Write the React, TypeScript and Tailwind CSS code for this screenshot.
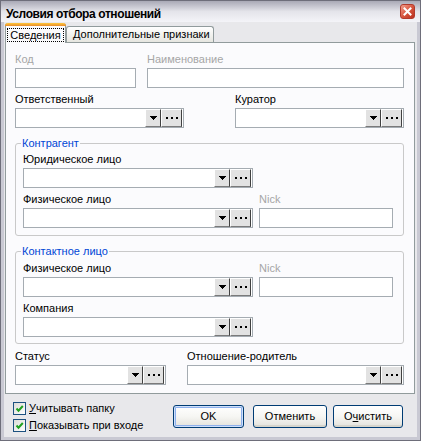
import { ReactNode } from 'react';
import clsx from 'clsx';

function Label({ children, disabled }: { children: ReactNode; disabled?: boolean }) {
  return (
    <div className={clsx('h-[13px] mb-[2px] whitespace-nowrap', disabled ? 'text-[#a6a6a6]' : 'text-black')}>
      {children}
    </div>
  );
}

function Field({ label, disabled, children }: { label: string; disabled?: boolean; children: ReactNode }) {
  return (
    <div className="flex flex-col">
      <Label disabled={disabled}>{label}</Label>
      {children}
    </div>
  );
}

function TextBox({ className }: { className: string }) {
  return <div className={clsx('h-[20px] border border-[#a5acb2] bg-white', className)} />;
}

function Combo({ className }: { className: string }) {
  return (
    <div className={clsx('h-[20px] border border-[#a5acb2] bg-white flex justify-end pr-px', className)}>
      <div className="w-[16px] h-full bg-[#e2e2e2] border-t border-l border-t-white border-l-white border-r border-b border-r-[#404040] border-b-[#7a7a7a] flex items-center justify-center">
        <svg width="7" height="4" viewBox="0 0 7 4" shapeRendering="crispEdges">
          <path d="M0 0H7V1H6V2H5V3H4V4H3V3H2V2H1V1H0Z" fill="#000" />
        </svg>
      </div>
      <div className="w-[21px] h-full bg-[#e2e2e2] border-t border-l border-t-white border-l-white border-r border-b border-r-[#404040] border-b-[#7a7a7a] flex items-center justify-center">
        <svg width="12" height="2" viewBox="0 0 12 2" shapeRendering="crispEdges">
          <rect x="0" y="0" width="2" height="2" fill="#000" />
          <rect x="5" y="0" width="2" height="2" fill="#000" />
          <rect x="10" y="0" width="2" height="2" fill="#000" />
        </svg>
      </div>
    </div>
  );
}

function GroupBox({ title, className, children }: { title: string; className: string; children: ReactNode }) {
  return (
    <div className={clsx('relative border border-[#c9c9c9] rounded-[3px]', className)}>
      <span className="absolute left-[5px] top-[-7px] px-px bg-[#fbfbfd] text-[#0046d5] leading-[13px]">{title}</span>
      {children}
    </div>
  );
}

function Check({ children }: { children: ReactNode }) {
  return (
    <div className="flex items-start gap-[3px] h-[13px]">
      <div className="w-[13px] h-[13px] border border-[#1c5180] bg-gradient-to-br from-[#dcdcd7] to-white flex items-center justify-center">
        <svg width="9" height="9" viewBox="0 0 9 9">
          <path d="M1.5 4.5l2 2.2L7.8 2" stroke="#21a121" strokeWidth="2" fill="none" />
        </svg>
      </div>
      <span className="leading-[13px]">{children}</span>
    </div>
  );
}

function XpButton({ className, isDefault, children }: { className: string; isDefault?: boolean; children: ReactNode }) {
  return (
    <div
      className={clsx(
        'h-[23px] rounded-[3px] border border-[#003c74] bg-gradient-to-b from-white via-[#f6f6f3] to-[#e3e2dc] flex items-center justify-center',
        isDefault
          ? 'shadow-[inset_0_0_0_1px_#cee0fb,inset_0_0_0_2px_#8eb0ec]'
          : 'shadow-[inset_0_-2px_0_#d6d5cc]',
        className
      )}
    >
      {children}
    </div>
  );
}

export default function App() {
  return (
    <div className="w-[421px] h-[441px] flex flex-col border border-[#6e6e7a] bg-[#c9c9d3] text-[11px] leading-[13px] text-black font-['Liberation_Sans',Arial,sans-serif]">
      {/* Title bar */}
      <div className="h-[21px] flex items-start justify-between pl-[5px] pr-[5px] bg-gradient-to-b from-[#a9a9b6] via-[#e4e4ea] to-[#f4f4f8]">
        <span className="mt-[6px] text-[12px] leading-[15px] font-bold tracking-[-0.4px]">Условия отбора отношений</span>
        <div className="mt-[3px] w-[15px] h-[15px] rounded-[3px] border border-[#b23a2c] bg-gradient-to-br from-[#f0a090] via-[#d8563f] to-[#b9301e] flex items-center justify-center">
          <svg width="9" height="9" viewBox="0 0 9 9">
            <path d="M1.5 1.5l6 6M7.5 1.5l-6 6" stroke="#fff" strokeWidth="2" strokeLinecap="square" />
          </svg>
        </div>
      </div>

      {/* Body */}
      <div className="flex-1 mx-[3px] mb-[3px] bg-[#e8e8eb] flex flex-col pl-px pr-[2px]">
        {/* Tabs */}
        <div className="h-[20px] flex items-end">
          <div className="relative z-10 -mb-px h-[20px] w-[61px] border-x border-[#919b9c] bg-[#fbfbfd] rounded-t-[3px] flex flex-col">
            <div className="-mx-px h-[3px] rounded-t-[3px] bg-gradient-to-b from-[#ffc83c] to-[#e68b2c]" />
            <div className="flex-1 flex items-center justify-center">
              <span className="border border-dotted border-black px-[2px] leading-[12px]">Сведения</span>
            </div>
          </div>
          <div className="h-[16px] w-[148px] border border-b-0 border-[#919b9c] rounded-t-[3px] bg-gradient-to-b from-white to-[#e6e6e0] flex items-center pl-[6px] whitespace-nowrap">
            Дополнительные признаки
          </div>
        </div>

        {/* Tab panel */}
        <div className="h-[352px] border border-[#919b9c] bg-[#fbfbfd] pt-[10px] pl-[9px] pr-[10px]">
          <div className="flex gap-[11px]">
            <Field label="Код" disabled>
              <TextBox className="w-[121px]" />
            </Field>
            <Field label="Наименование" disabled>
              <TextBox className="w-[257px]" />
            </Field>
          </div>

          <div className="mt-[5px] flex justify-between">
            <Field label="Ответственный">
              <Combo className="w-[169px]" />
            </Field>
            <Field label="Куратор">
              <Combo className="w-[169px]" />
            </Field>
          </div>

          <GroupBox title="Контрагент" className="mt-[15px] pt-[9px] pb-[7px] pl-[7px] pr-[10px]">
            <Field label="Юридическое лицо">
              <Combo className="w-[230px]" />
            </Field>
            <div className="mt-[5px] flex gap-[6px]">
              <Field label="Физическое лицо">
                <Combo className="w-[230px]" />
              </Field>
              <Field label="Nick" disabled>
                <TextBox className="w-[134px]" />
              </Field>
            </div>
          </GroupBox>

          <GroupBox title="Контактное лицо" className="mt-[15px] pt-[10px] pb-[6px] pl-[7px] pr-[10px]">
            <div className="flex gap-[6px]">
              <Field label="Физическое лицо">
                <Combo className="w-[230px]" />
              </Field>
              <Field label="Nick" disabled>
                <TextBox className="w-[134px]" />
              </Field>
            </div>
            <div className="mt-[5px]">
              <Field label="Компания">
                <Combo className="w-[230px]" />
              </Field>
            </div>
          </GroupBox>

          <div className="mt-[6px] flex gap-[21px]">
            <Field label="Статус">
              <Combo className="w-[151px]" />
            </Field>
            <Field label="Отношение-родитель">
              <Combo className="w-[217px]" />
            </Field>
          </div>
        </div>

        {/* Footer */}
        <div className="flex-1 flex justify-between pl-[8px] pr-[12px] pt-[8px]">
          <div className="flex flex-col gap-[4px]">
            <Check>
              <u>У</u>читывать папку
            </Check>
            <Check>
              <u>П</u>оказывать при входе
            </Check>
          </div>
          <div className="mt-[3px] flex">
            <XpButton className="w-[71px]" isDefault>
              OK
            </XpButton>
            <XpButton className="ml-[9px] w-[74px]">Отменить</XpButton>
            <XpButton className="ml-[6px] w-[70px]">
              О<u>ч</u>истить
            </XpButton>
          </div>
        </div>
      </div>
    </div>
  );
}
